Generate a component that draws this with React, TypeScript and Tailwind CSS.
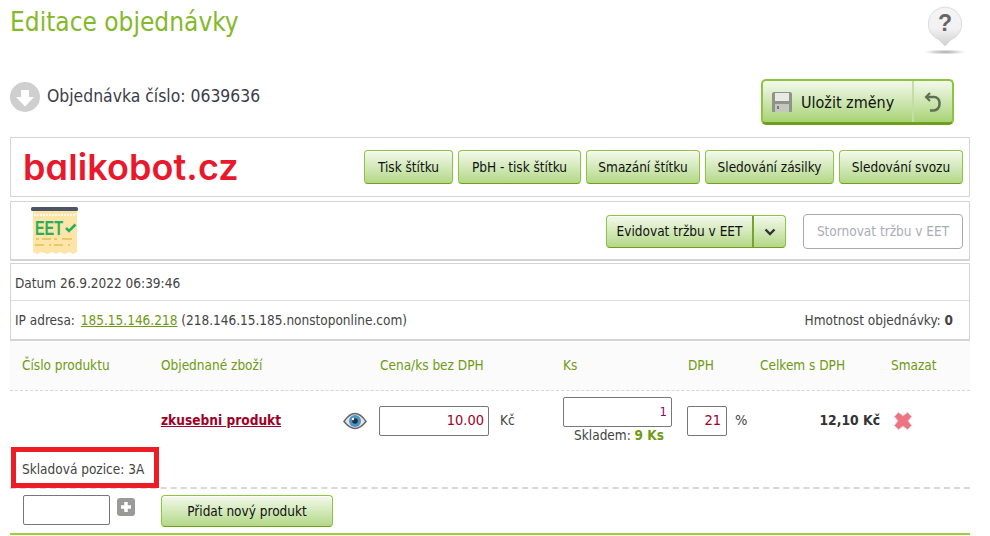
import React from 'react';

const greenBtn =
  'bg-linear-to-b from-[#f4f9ec] to-[#b3d886] border border-[#8cc63f] border-b-[#6f9f1e] rounded-[4px] text-[#111] text-[13.500px] flex items-center justify-center shadow-[inset_0_1px_0_#fff]';

const inputBox = 'border border-[#777] rounded-[2px] bg-white text-right flex items-center justify-end';

const HelpIcon = () => (
  <svg width="44" height="54" viewBox="0 0 44 54">
    <defs>
      <linearGradient id="hb" x1="0" y1="0" x2="0" y2="1">
        <stop offset="0" stopColor="#f4f4f4" />
        <stop offset="0.55" stopColor="#f2f2f2" />
        <stop offset="1" stopColor="#cfcfcf" />
      </linearGradient>
      <radialGradient id="hs">
        <stop offset="0" stopColor="#aaa" />
        <stop offset="1" stopColor="#fff" />
      </radialGradient>
    </defs>
    <ellipse cx="22" cy="50" rx="21" ry="2.5" fill="url(#hs)" />
    <path d="M22 5a17 17 0 0 1 6 32.8L22 44l-6-6.200A17 17 0 0 1 22 5z" fill="url(#hb)" stroke="#ddd" />
    <text x="22" y="29" textAnchor="middle" fontSize="23" fontWeight="700" fill="#666" fontFamily="'Liberation Sans', sans-serif">?</text>
  </svg>
);

const DownIcon = () => (
  <svg width="30" height="30" viewBox="0 0 30 30" className="shrink-0">
    <circle cx="15" cy="15" r="15" fill="#cfcfcf" />
    <path d="M11 8h8v7h5l-9 9.500L6 15h5z" fill="#fff" />
  </svg>
);

const SaveIcon = () => (
  <svg width="20" height="20" viewBox="0 0 20 20" className="shrink-0">
    <path d="M0 2a2 2 0 0 1 2-2h16a2 2 0 0 1 2 2v17a1 1 0 0 1-1 1H1a1 1 0 0 1-1-1z" fill="#8f9389" />
    <rect x="3" y="1" width="14" height="8" fill="#e8ebe3" />
    <rect x="3" y="12" width="14" height="8" fill="#c4c7bd" />
    <rect x="5" y="14" width="2" height="3" fill="#777" />
  </svg>
);

const UndoIcon = () => (
  <svg width="18" height="22" viewBox="0 0 18 22" fill="none">
    <path d="M6 2L2 6l4 4" stroke="#5f6f52" strokeWidth="2.200" />
    <path d="M3 6h7a5.500 5.500 0 0 1 5.500 5.500v2A6 6 0 0 1 9.500 19.500H6" stroke="#5f6f52" strokeWidth="2.500" />
  </svg>
);

const EetIcon = () => (
  <svg width="48" height="48" viewBox="0 0 48 48">
    <rect x="0" y="0" width="47" height="4" rx="1.500" fill="#4a5568" />
    <path d="M2 4h44v41l-4 2-4-2-4.500 2-4.500-2-4 2-4-2-4.500 2L10 45l-4 2-4-2z" fill="#fde4a8" />
    <path d="M3 8h42" stroke="#fff" strokeWidth="1.500" strokeDasharray="2 1" />
    <text x="4" y="28" fontSize="20" fontWeight="700" fill="#2bae5c" textLength="28" lengthAdjust="spacingAndGlyphs" fontFamily="'Liberation Sans', sans-serif">EET</text>
    <path d="M35 21l3 3 6.500-6.500" stroke="#2bae5c" strokeWidth="2.500" fill="none" />
    <path d="M5 32h3M11 32h9M23 32h3M31 32h10M4 38h9M18 38h2M23 38h9M37 38h2" stroke="#e0c34f" strokeWidth="1.300" />
  </svg>
);

const EyeIcon = () => (
  <svg width="24" height="18" viewBox="0 0 24 18">
    <path d="M1 9.500C5 3.500 8.500 1.500 12 1.500s7 2 11 8c-4 5-7.500 7-11 7s-7-2-11-7z" fill="#e4e4e4" stroke="#666" strokeWidth="1.500" />
    <circle cx="12" cy="9" r="6" fill="#4f93c4" />
    <circle cx="12" cy="9" r="2.800" fill="#17324a" />
    <circle cx="10" cy="7" r="1.200" fill="#fff" />
  </svg>
);

const RedX = () => (
  <svg width="18" height="18" viewBox="0 0 18 18">
    <path d="M4.500 0.500L9 4l4.500-3.500 4 4L14 9l3.500 4.500-4 4L9 14l-4.500 3.500-4-4L4 9 0.500 4.500z" fill="#ee7482" stroke="#f0b5bb" strokeWidth="0.800" />
  </svg>
);

const PlusIcon = () => (
  <svg width="18" height="18" viewBox="0 0 18 18">
    <rect width="18" height="18" rx="3" fill="#9a9a98" />
    <path d="M9 4v10M4 9h10" stroke="#fff" strokeWidth="3.500" />
  </svg>
);

const ChevronIcon = () => (
  <svg width="12" height="8" viewBox="0 0 12 8" fill="none">
    <path d="M1.500 1.500L6 6l4.500-4.500" stroke="#333" strokeWidth="2.400" />
  </svg>
);

const cols = 'grid grid-cols-[139px_218px_184px_124px_73px_131px_79px]';

export default function App() {
  return (
    <div className="w-[990px] h-[536px] overflow-hidden bg-white text-[#444] text-[14px] font-['DejaVu_Sans_Condensed','DejaVu_Sans',sans-serif]">
      <div className="px-[10px] w-[980px]">
        {/* page title */}
        <div className="h-[56px] flex justify-between pr-[4px]">
          <h1 className="text-[26px] leading-[44px] text-[#84b92a]">Editace objednávky</h1>
          <div className="mt-[2px] mr-[-1px]">
            <HelpIcon />
          </div>
        </div>

        <div className="h-[81px] flex justify-between pt-[23px] pr-[16px]">
          <div className="flex items-start gap-[7px] pt-[3px]">
            <DownIcon />
            <span className="text-[17.400px] leading-[28px] text-[#3c3c4a]">Objednávka číslo: 0639636</span>
          </div>
          <div className="w-[193px] h-[46px] flex rounded-[5px] border-2 border-[#8cc63f] border-b-[3px] border-b-[#6f9f1e] bg-linear-to-b from-[#f4f9ec] to-[#a9d374]">
            <div className="flex-1 flex items-center gap-[9px] pl-[9px] border-r-2 border-r-[#c6dba6] text-[16px] text-[#111]">
              <SaveIcon />
              <span className="pt-[2px]">Uložit změny</span>
            </div>
            <div className="w-[38px] flex items-center justify-center">
              <UndoIcon />
            </div>
          </div>
        </div>

        {/* balikobot */}
        <div className="h-[60px] border border-[#d4d4d4] flex items-center justify-between pl-[12px] pr-[6px]">
          <span className="font-['Inter',sans-serif] [font-feature-settings:'cv11'] text-[36px] tracking-[0.1px] font-semibold leading-none text-[#e8192c]">balikobot.cz</span>
          <div className="flex gap-[5px]">
            <div className={`${greenBtn} w-[89px] h-[34px]`}>Tisk štítku</div>
            <div className={`${greenBtn} w-[123px] h-[34px]`}>PbH - tisk štítku</div>
            <div className={`${greenBtn} w-[114px] h-[34px]`}>Smazání štítku</div>
            <div className={`${greenBtn} w-[129px] h-[34px]`}>Sledování zásilky</div>
            <div className={`${greenBtn} w-[124px] h-[34px]`}>Sledování svozu</div>
          </div>
        </div>

        {/* EET */}
        <div className="mt-[4px] h-[60px] border border-b-2 border-[#d4d4d4] flex items-center justify-between pl-[20px] pr-[6px]">
          <EetIcon />
          <div className="flex items-center gap-[17px] pt-[2px]">
            <div className={`${greenBtn} w-[180px] h-[33px]`}>
              <span className="flex-1 text-center border-r-2 border-r-[#7aa32e] leading-[31px] h-full">Evidovat tržbu v EET</span>
              <span className="w-[31px] flex justify-center">
                <ChevronIcon />
              </span>
            </div>
            <div className="w-[160px] h-[35px] border border-[#aaa] rounded-[4px] flex items-center justify-center text-[13.500px] text-[#a8adb8]">
              Stornovat tržbu v EET
            </div>
          </div>
        </div>

        {/* order info */}
        <div className="mt-[2px] border border-[#d4d4d4] border-b-2 text-[13.500px]">
          <div className="h-[37px] flex items-center pl-[4px] pt-[2px] border-b border-[#dedede]">Datum 26.9.2022 06:39:46</div>
          <div className="h-[38px] flex items-center justify-between pl-[4px] pr-[16px]">
            <span>
              IP adresa: <span className="ml-[2px] text-[#6f9a14] underline">185.15.146.218</span> (218.146.15.185.nonstoponline.com)
            </span>
            <span>
              Hmotnost objednávky: <b>0</b>
            </span>
          </div>
        </div>

        {/* products */}
        <div className={`${cols} h-[50px] items-center bg-[#fafbfa] border-b border-dashed border-[#d8d8d8] text-[13.500px] text-[#6f9a14] pl-[12px]`}>
          <span>Číslo produktu</span>
          <span>Objednané zboží</span>
          <span className="pl-[1px]">Cena/ks bez DPH</span>
          <span>Ks</span>
          <span className="pl-[1px]">DPH</span>
          <span>Celkem s DPH</span>
          <span>Smazat</span>
        </div>

        <div className={`${cols} h-[59px] pl-[12px] pt-[6px] text-[13.500px]`}>
          <span />
          <div className="flex items-center justify-between pr-[12px] h-[47px]">
            <span className="text-[#a00028] font-bold underline text-[13.600px]">zkusebni produkt</span>
            <EyeIcon />
          </div>
          <div className="flex items-center gap-[11px] h-[47px]">
            <div className={`${inputBox} w-[110px] h-[30px] pr-[4px] text-[14.500px] text-[#a00028]`}>10.00</div>
            <span>Kč</span>
          </div>
          <div className="flex flex-col">
            <div className={`${inputBox} w-[109px] h-[30px] pr-[4px] text-[13px] text-[#8a0a6a]`}>1</div>
            <div className="w-[109px] pl-[3px] text-center leading-[16px]">
              Skladem: <b className="text-[#6f9a14]">9 Ks</b>
            </div>
          </div>
          <div className="flex items-center gap-[8px] h-[47px]">
            <div className={`${inputBox} w-[40px] h-[30px] pr-[5px] text-[14.500px] text-[#a00028]`}>21</div>
            <span className="text-[14.500px]">%</span>
          </div>
          <div className="flex items-center justify-end pr-[11px] h-[47px] font-bold text-[13.800px] text-[#333]">12,10 Kč</div>
          <div className="flex items-center h-[47px] pl-[3px]">
            <RedX />
          </div>
        </div>

        <div className="h-[39px] flex items-end border-b-2 border-dashed border-[#d8d8d8] relative">
          <span className="absolute left-[1px] -top-[3px] w-[148px] h-[41px] border-[5px] border-[#ee1c25] flex items-center pl-[6px] pt-[3px] text-[13.500px]">Skladová pozice: 3A</span>
        </div>

        <div className="h-[46px] border-b-2 border-[#9bcf3c] flex pl-[13px] pt-[6px]">
          <div className="w-[87px] h-[30px] border border-[#777] rounded-[2px]" />
          <div className="ml-[7px] mt-[3px]">
            <PlusIcon />
          </div>
          <div className={`${greenBtn} ml-[26px] w-[172px] h-[32px]`}>Přidat nový produkt</div>
        </div>
      </div>
    </div>
  );
}
